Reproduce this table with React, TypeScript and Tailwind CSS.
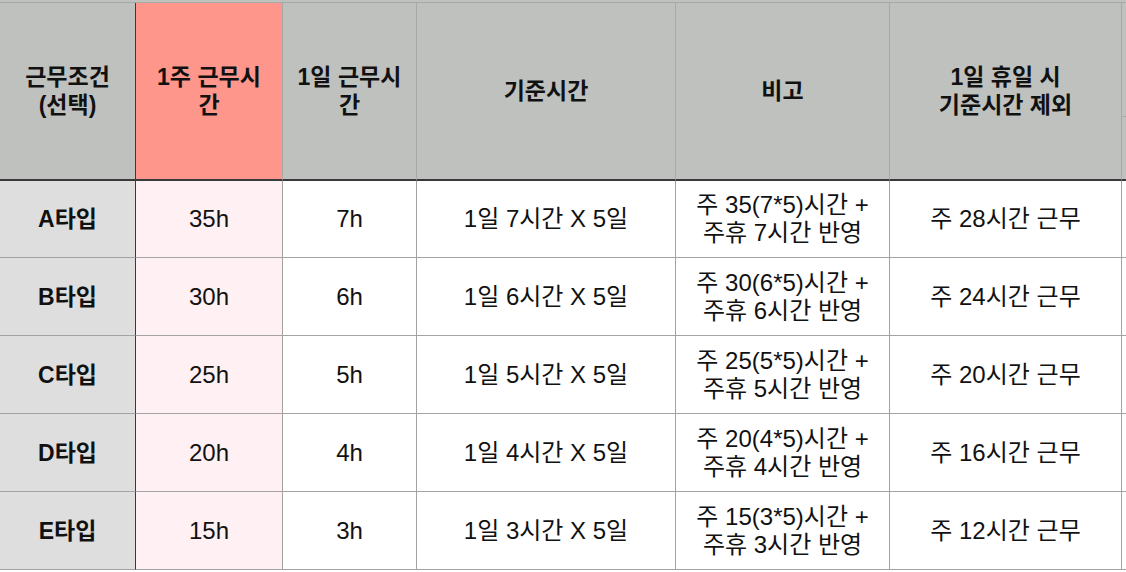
import React from "react";

const rows = [
  { t: "A", w: "35h", d: "7h", n: 7, total: 35, ex: 28 },
  { t: "B", w: "30h", d: "6h", n: 6, total: 30, ex: 24 },
  { t: "C", w: "25h", d: "5h", n: 5, total: 25, ex: 20 },
  { t: "D", w: "20h", d: "4h", n: 4, total: 20, ex: 16 },
  { t: "E", w: "15h", d: "3h", n: 3, total: 15, ex: 12 },
];

const font = { fontFamily: '"Liberation Sans", "Noto Sans CJK KR", sans-serif' };

export default function App() {
  return (
    <div className="w-[1126px] h-[572px] overflow-hidden bg-white text-[#111]" style={font}>
      <div className="bg-[#bfc1bf] pt-[2px] w-[1230px]">
        <div className="grid grid-cols-[136px_147px_134px_259px_214px_232px_108px] border-t border-[#a8a8a8] text-[24px] leading-[28px]">
          {/* header */}
          <div className="h-[178px] flex items-center justify-center text-center text-[23px] font-bold bg-[#bfc1bf] border-r border-[#3a3a3a] border-b-2 border-b-[#3a3a3a]">
            근무조건<br />(선택)
          </div>
          <div className="h-[178px] flex items-center justify-center text-center text-[23px] font-bold bg-[#ff968c] border-r border-[#a8a8a8] border-b-2 border-b-[#3a3a3a]">
            1주 근무시<br />간
          </div>
          <div className="h-[178px] flex items-center justify-center text-center text-[23px] font-bold bg-[#bfc1bf] border-r border-[#a8a8a8] border-b-2 border-b-[#3a3a3a]">
            1일 근무시<br />간
          </div>
          <div className="h-[178px] flex items-center justify-center text-center text-[23px] font-bold bg-[#bfc1bf] border-r border-[#a8a8a8] border-b-2 border-b-[#3a3a3a]">
            기준시간
          </div>
          <div className="h-[178px] flex items-center justify-center text-center text-[23px] font-bold bg-[#bfc1bf] border-r border-[#a8a8a8] border-b-2 border-b-[#3a3a3a]">
            비고
          </div>
          <div className="h-[178px] flex items-center justify-center text-center text-[23px] font-bold bg-[#bfc1bf] border-r border-[#a8a8a8] border-b-2 border-b-[#3a3a3a]">
            1일 휴일 시<br />기준시간 제외
          </div>
          <div className="h-[178px] flex flex-col bg-[#bfc1bf] border-b-2 border-b-[#3a3a3a]">
            <div className="h-[114px] border-b border-[#a8a8a8]" />
          </div>

          {rows.map((r, i) => {
            const h = i === 0 ? "h-[77px]" : "h-[78px]";
            const cell = `${h} flex items-center justify-center text-center border-b border-[#a3a3a3]`;
            return (
              <React.Fragment key={r.t}>
                <div className={`${cell} text-[23px] font-bold bg-[#dedede] border-r border-r-[#3a3a3a]`}>{r.t}타입</div>
                <div className={`${cell} bg-[#fff0f3] border-r border-r-[#a3a3a3]`}>{r.w}</div>
                <div className={`${cell} bg-white border-r border-r-[#a3a3a3]`}>{r.d}</div>
                <div className={`${cell} bg-white border-r border-r-[#a3a3a3]`}>1일 {r.n}시간 X 5일</div>
                <div className={`${cell} bg-white border-r border-r-[#a3a3a3]`}>
                  주 {r.total}({r.n}*5)시간 +<br />주휴 {r.n}시간 반영
                </div>
                <div className={`${cell} bg-white border-r border-r-[#a3a3a3]`}>주 {r.ex}시간 근무</div>
                <div className={`${cell} bg-white`} />
              </React.Fragment>
            );
          })}
        </div>
      </div>
    </div>
  );
}
